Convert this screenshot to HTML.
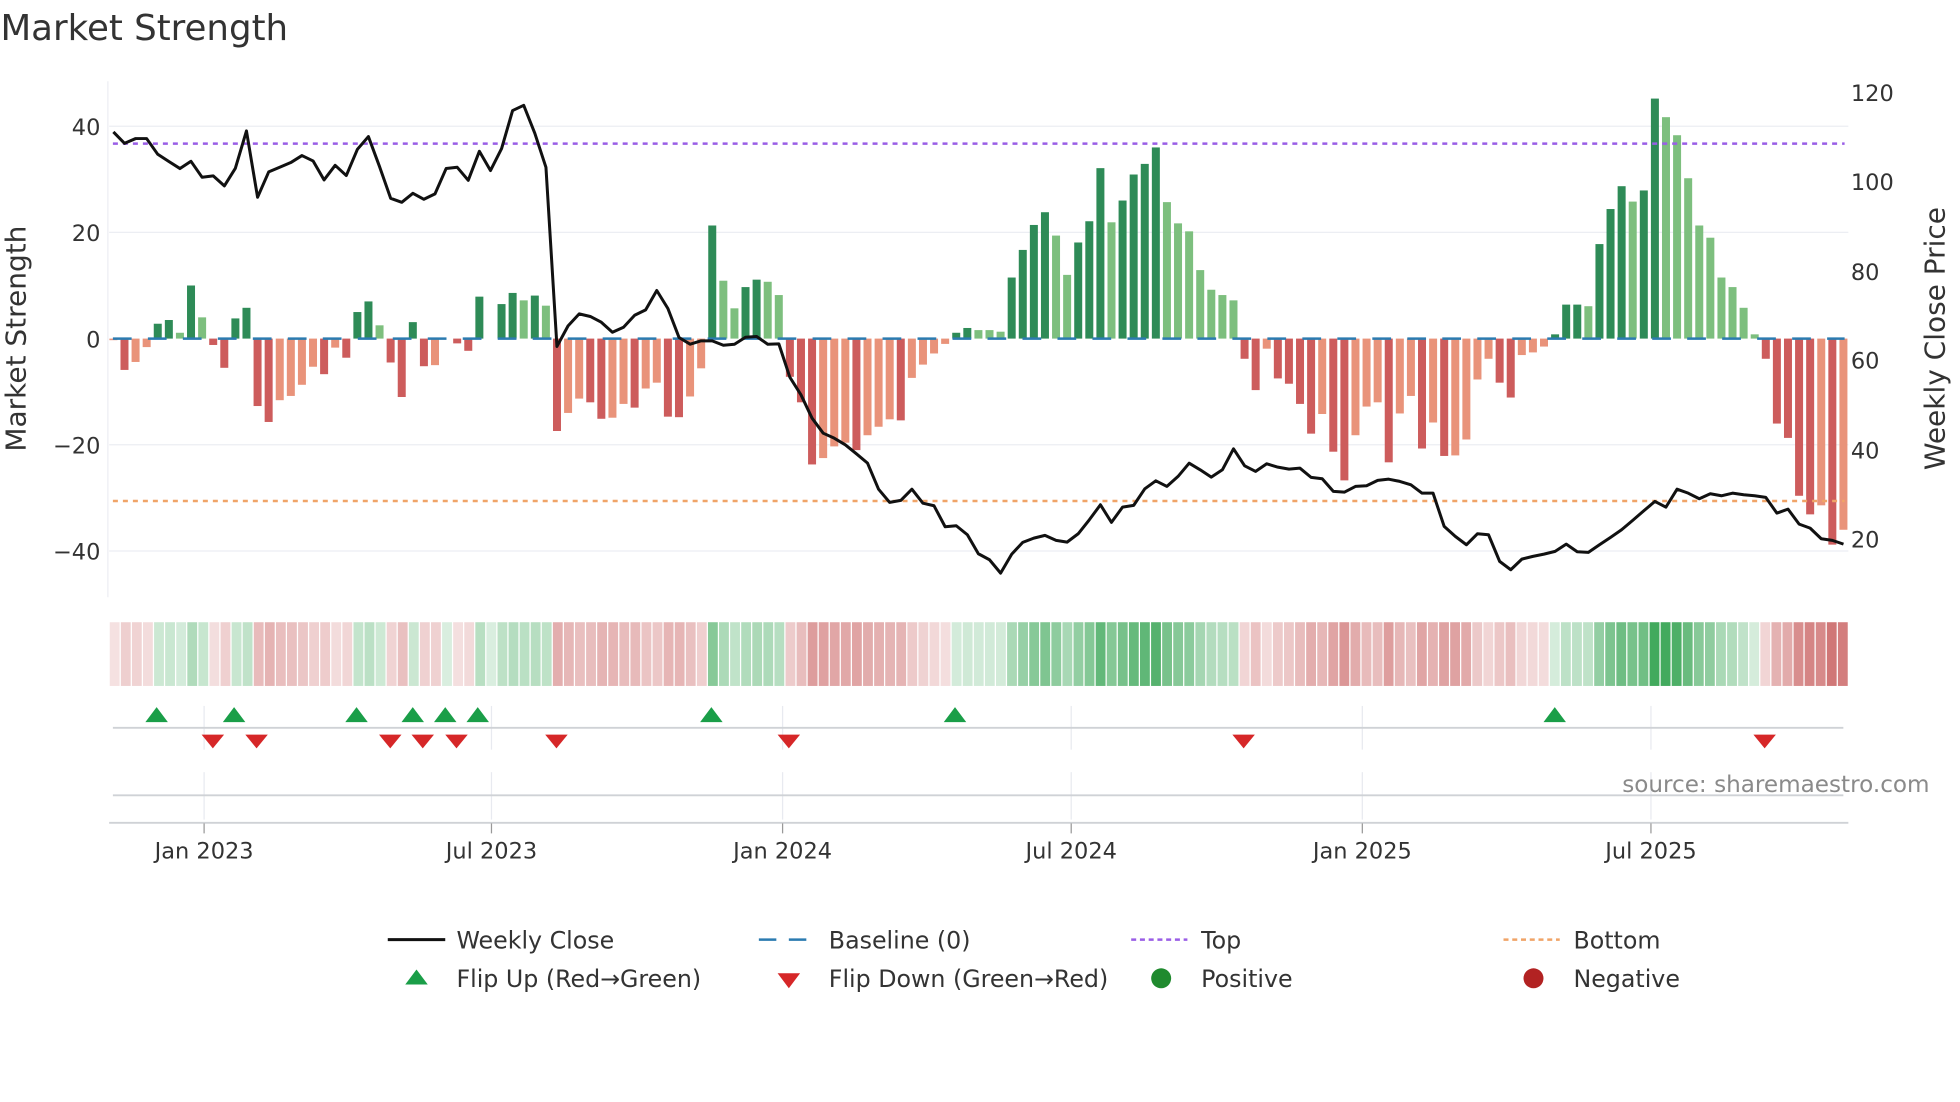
<!DOCTYPE html>
<html><head><meta charset="utf-8"><style>
html,body{margin:0;padding:0;background:#fff;overflow:hidden}
svg{display:block}
text{font-family:"DejaVu Sans","Liberation Sans",sans-serif;fill:#333}
</style></head><body>
<svg id="c" xmlns="http://www.w3.org/2000/svg" width="1960" height="1102" viewBox="0 0 1568 882">
<text x="0" y="32" font-size="28.5">Market Strength</text>
<g stroke="#eceef3" stroke-width="1">
<line x1="86" y1="65" x2="86" y2="478"/>
<line x1="87" y1="101" x2="1479" y2="101"/>
<line x1="87" y1="186" x2="1479" y2="186"/>
<line x1="87" y1="356" x2="1479" y2="356"/>
<line x1="87" y1="441" x2="1479" y2="441"/>
</g>
<g font-size="18" text-anchor="end">
<text x="80" y="108">40</text><text x="80" y="193">20</text><text x="80" y="278">0</text>
<text x="80" y="363">−20</text><text x="80" y="448">−40</text>
</g>
<g font-size="18">
<text x="1481" y="81">120</text><text x="1481" y="152">100</text><text x="1481" y="224">80</text>
<text x="1481" y="295">60</text><text x="1481" y="367">40</text><text x="1481" y="438">20</text>
</g>
<text font-size="22.4" transform="translate(20,271) rotate(-90)" text-anchor="middle">Market Strength</text>
<text font-size="22.4" transform="translate(1556,271) rotate(-90)" text-anchor="middle">Weekly Close Price</text>
<g id="bars"></g>
<line x1="90" y1="271" x2="1476" y2="271" stroke="#2b7bb0" stroke-width="2" stroke-dasharray="15,13"/>
<line x1="90" y1="115" x2="1476" y2="115" stroke="#9a5ee6" stroke-width="2" stroke-dasharray="4,4"/>
<line x1="90" y1="401" x2="1476" y2="401" stroke="#f0a468" stroke-width="2" stroke-dasharray="4,4"/>
<path id="price" fill="none" stroke="#111" stroke-width="2.4" stroke-linejoin="round"/>
<g id="strip"></g>
<g stroke="#e8eaf0" stroke-width="1">
<line x1="163" y1="565" x2="163" y2="600"/><line x1="393" y1="565" x2="393" y2="600"/><line x1="626" y1="565" x2="626" y2="600"/>
<line x1="857" y1="565" x2="857" y2="600"/><line x1="1090" y1="565" x2="1090" y2="600"/><line x1="1321" y1="565" x2="1321" y2="600"/>
<line x1="163" y1="618" x2="163" y2="656"/><line x1="393" y1="618" x2="393" y2="656"/><line x1="626" y1="618" x2="626" y2="656"/>
<line x1="857" y1="618" x2="857" y2="656"/><line x1="1090" y1="618" x2="1090" y2="656"/><line x1="1321" y1="618" x2="1321" y2="656"/>
</g>
<line x1="90" y1="582.5" x2="1475" y2="582.5" stroke="#cfd2d6" stroke-width="1.5"/>
<line x1="90" y1="636.5" x2="1475" y2="636.5" stroke="#cfd2d6" stroke-width="1.5"/>
<line x1="87" y1="658.5" x2="1479" y2="658.5" stroke="#cfd2d6" stroke-width="1.5"/>
<g stroke="#999" stroke-width="1">
<line x1="163" y1="659" x2="163" y2="667"/><line x1="393" y1="659" x2="393" y2="667"/><line x1="626" y1="659" x2="626" y2="667"/>
<line x1="857" y1="659" x2="857" y2="667"/><line x1="1090" y1="659" x2="1090" y2="667"/><line x1="1321" y1="659" x2="1321" y2="667"/>
</g>
<g id="marks"></g>
<text x="1544" y="634" font-size="18.5" text-anchor="end" style="fill:#8a8a8a">source: sharemaestro.com</text>
<g font-size="18" text-anchor="middle">
<text x="163" y="687">Jan 2023</text><text x="393" y="687">Jul 2023</text><text x="626" y="687">Jan 2024</text>
<text x="857" y="687">Jul 2024</text><text x="1090" y="687">Jan 2025</text><text x="1321" y="687">Jul 2025</text>
</g>
<g font-size="19">
<line x1="310" y1="752" x2="356" y2="752" stroke="#111" stroke-width="2.4"/>
<text x="365" y="759">Weekly Close</text>
<line x1="607" y1="752" x2="652" y2="752" stroke="#2b7bb0" stroke-width="2" stroke-dasharray="14,10"/>
<text x="663" y="759">Baseline (0)</text>
<line x1="905" y1="752" x2="950" y2="752" stroke="#9a5ee6" stroke-width="2" stroke-dasharray="4,3"/>
<text x="961" y="759">Top</text>
<line x1="1203" y1="752" x2="1248" y2="752" stroke="#f0a468" stroke-width="2" stroke-dasharray="4,3"/>
<text x="1259" y="759">Bottom</text>
<polygon points="324,788 342,788 333,776" fill="#1a9e48"/>
<text x="365" y="790">Flip Up (Red→Green)</text>
<polygon points="622,779 640,779 631,791" fill="#d62728"/>
<text x="663" y="790">Flip Down (Green→Red)</text>
<circle cx="929" cy="783" r="8" fill="#1f8a2e"/>
<text x="961" y="790">Positive</text>
<circle cx="1227" cy="783" r="8" fill="#b22222"/>
<text x="1259" y="790">Negative</text>
</g>
</svg>
<script>
var NS="http://www.w3.org/2000/svg";
function el(t,a,p){var e=document.createElementNS(NS,t);for(var k in a)e.setAttribute(k,a[k]);p.appendChild(e);return e;}
var B="-0.3L -5.9D -4.4L -1.6L 2.8D 3.5D 1.1L 10D 4L -1.2D -5.5D 3.8D 5.8D -12.7D -15.7D -11.6L -10.8L -8.7L -5.3L -6.7D -1.7L -3.6D 5D 7D 2.5L -4.5D -11D 3.1D -5.2D -5L 0L -0.9D -2.3D 7.9D 0L 6.5D 8.6D 7.2L 8.1D 6.2L -17.4D -14L -11.3L -12D -15.1D -14.9L -12.3L -13D -9.4L -8.3L -14.7D -14.8D -10.9L -5.6L 21.3D 10.9L 5.7L 9.7D 11.1D 10.7L 8.2L -7.2D -12D -23.7D -22.5L -20.3L -19.6L -21D -18.2L -16.6L -15.2L -15.4D -7.4L -4.9L -2.8L -1L 1.1D 2D 1.6L 1.6L 1.3L 11.5D 16.7D 21.4D 23.8D 19.4L 12L 18.1D 22.1D 32.1D 21.9L 26D 30.9D 32.9D 36D 25.7L 21.7L 20.2L 12.9L 9.2L 8.2L 7.2L -3.8D -9.7D -1.9L -7.5D -8.5D -12.3D -17.9D -14.2L -21.3D -26.7D -18.2L -12.8L -12L -23.3D -14.1L -10.8L -20.7D -15.8L -22.1D -22L -19L -7.7L -3.8L -8.3D -11.1D -3.1L -2.6L -1.5L 0.8D 6.4D 6.4D 6.1L 17.8D 24.4D 28.7D 25.8L 27.9D 45.2D 41.7L 38.3L 30.2L 21.3L 19L 11.5L 9.7L 5.8L 0.8L -3.8D -16D -18.7D -29.6D -33.1D -31.4L -38.8D -36L".split(" ");
var P=[126,160,146,146,193,215,236,214,262,258,288,235,123,322,246,232,218,197,213,270,226,257,178,140,230,325,337,310,328,312,236,232,271,184,242,176,62,46,130,232,770,
708,672,680,697,727,712,676,660,602,656,743,763,753,753,766,763,742,740,763,762,862,915,985,1030,1045,1065,1092,1120,1198,1238,1232,1198,1240,1248,1311,1308,1335,1392,1410,1450,
1393,1358,1345,1337,1352,1357,1332,1290,1245,1298,1252,1247,1197,1173,1190,1160,1120,1140,1162,1140,1077,1128,1145,1122,1132,1138,1135,1163,1167,1205,1207,1190,1188,1172,1168,1175,1185,1210,1210,1310,
1340,1365,1332,1335,1415,1440,1408,1400,1393,1385,1363,1386,1388,1365,1343,1320,1292,1263,1235,1252,1198,1210,1227,1212,1218,1210,1215,1218,1223,1270,1258,1303,1315,1347,1352,1363];
var x0=90.4,pt=8.876,bars=document.getElementById("bars"),strip=document.getElementById("strip");
function mix(a,b,t){return "rgb("+[0,1,2].map(function(i){return Math.round(a[i]+(b[i]-a[i])*t)}).join(",")+")";}
for(var i=0;i<B.length;i++){
 var s=B[i],v=parseFloat(s),d=s.slice(-1)=="D",x=x0+i*pt;
 var h=Math.abs(v)*4.25;
 if(h>0.3){var c=v>0?(d?"#2e8b57":"#7dbf7e"):(d?"#cd5c5c":"#e9937a");
  el("rect",{x:x-3.2,y:v>0?271-h:271,width:6.4,height:h,fill:c},bars);}
 var t=Math.min(Math.abs(v)/42,1),cc;
 t=0.18+0.72*Math.pow(t,0.9);
 cc=v>=0?mix([255,255,255],[45,160,75],t):mix([255,255,255],[200,95,95],t);
 el("rect",{x:87+i*(1392/157)+0.5,y:498,width:1392/157-1,height:51,fill:cc},strip);
}
var dd="";
for(var j=0;j<P.length;j++){var px=x0+j*pt,py=(90+P[j]/3)/1.25;dd+=(j?"L":"M")+px.toFixed(1)+" "+py.toFixed(1);}
document.getElementById("price").setAttribute("d",dd);
var m=document.getElementById("marks");
[125,187,285,330,356,382,569,764,1244].forEach(function(x){el("polygon",{points:(x-9)+",578 "+(x+9)+",578 "+x+",566",fill:"#1a9e48"},m);});
[170,205,312,338,365,445,631,995,1412].forEach(function(x){el("polygon",{points:(x-9)+",588 "+(x+9)+",588 "+x+",599",fill:"#d62728"},m);});
</script>
</body></html>
